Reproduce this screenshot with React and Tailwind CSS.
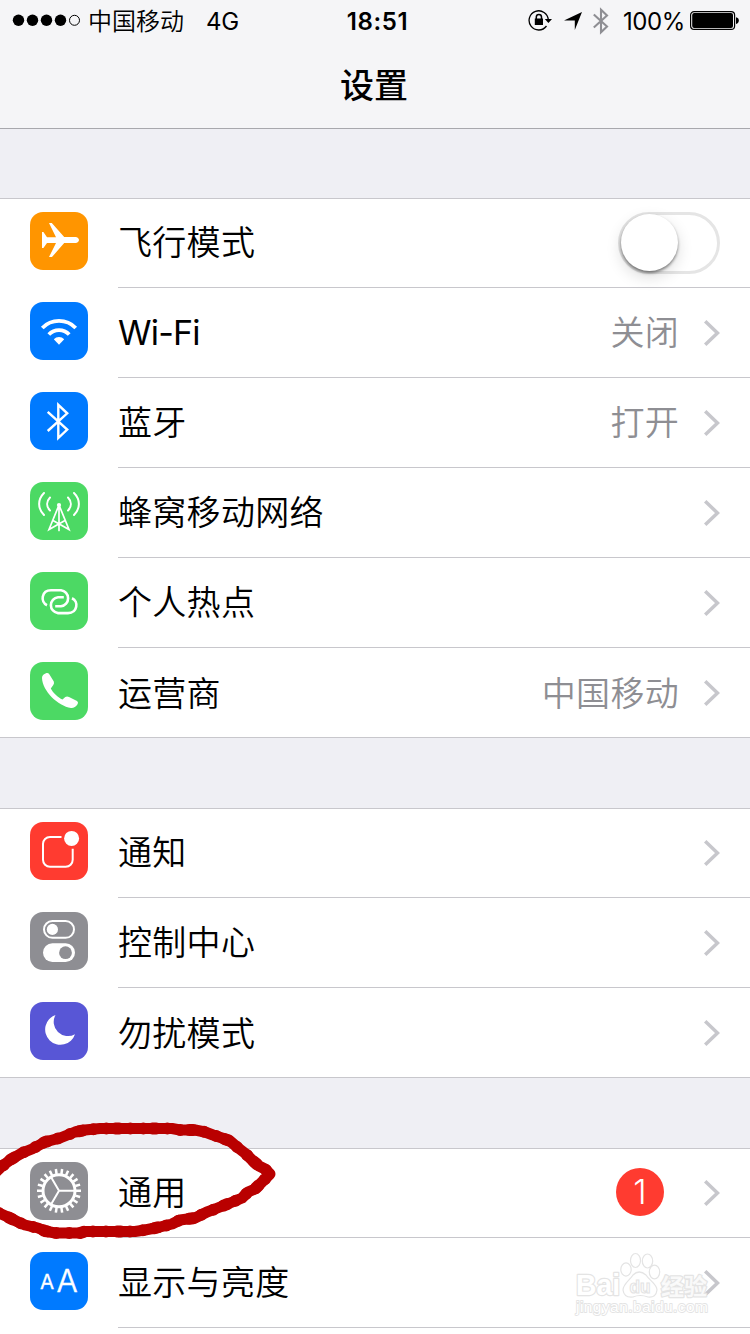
import React from "react";

const teeth = Array.from({ length: 22 }, (_, i) => (i * 360) / 22);

function Tile({ color, children }) {
  return (
    <svg viewBox="0 0 58 58" className={`size-[58px] shrink-0 rounded-[13px] ${color}`} fill="none" stroke="none">
      {children}
    </svg>
  );
}

const icons = {
  plane: (
    <Tile color="bg-[#ff9500]">
      <path
        fill="#fff"
        d="M12 20h1.400l3.600 5.300H26L19 11h2.800L34.200 25h11.300c2 0 3.500 1.500 3.500 3s-1.500 3-3.500 3H34.200L22 45h-3l7-14h-9l-3.600 5H12z"
      />
    </Tile>
  ),
  wifi: (
    <Tile color="bg-[#007aff]">
      <path stroke="#fff" strokeWidth="3.800" d="M12.300 26A23.300 23.300 0 0 1 45.700 26M18.800 32.500A14 14 0 0 1 39.200 32.500" />
      <path fill="#fff" d="M23.800 37.200a7.400 7.400 0 0 1 10.400 0L29 42.700z" />
    </Tile>
  ),
  bluetooth: (
    <Tile color="bg-[#007aff]">
      <path stroke="#fff" strokeWidth="2.400" d="M17.700 19.800L37.200 37.600L28.300 46V12.800L37.200 21.300L17.700 39" />
    </Tile>
  ),
  cellular: (
    <Tile color="bg-[#4cd964]">
      <g stroke="#fff" strokeWidth="2" strokeLinecap="round">
        <path d="M14 11C7.500 17.500 7.500 26.500 14 33M20 15.500C16.200 19.500 16.200 24.500 20 28.500M44 11C50.500 17.500 50.500 26.500 44 33M38 15.500C41.800 19.500 41.800 24.500 38 28.500" />
        <path strokeWidth="1.700" d="M29 23L19 47.500L35 38.500M29 23L39 47.500L23 38.500M29 23V48.500" />
      </g>
      <circle cx="29" cy="23" r="2.100" fill="#fff" />
    </Tile>
  ),
  hotspot: (
    <Tile color="bg-[#4cd964]">
      <g stroke="#fff" strokeWidth="2.600">
        <path d="M17 33.200C10 30 11.500 18.300 21 18.300H31A8 8 0 0 1 31 34.200H25.200" />
        <path transform="rotate(180 29.500 29.700)" d="M17 33.200C10 30 11.500 18.300 21 18.300H31A8 8 0 0 1 31 34.200H25.200" />
      </g>
    </Tile>
  ),
  phone: (
    <Tile color="bg-[#4cd964]">
      <path
        fill="#fff"
        d="M12 16Q11.800 12.600 16.500 11Q18.300 10.600 19.300 12.300L23.800 19.500Q24.500 21 23.300 23L20.800 26.500C22.800 30.500 28 35.500 32.500 37.600L35.300 35Q37 34 39 35L47 39Q48.600 40 47.700 42C46 45 43.500 46.200 41 46C28 44 12.500 29 12 16Z"
      />
    </Tile>
  ),
  notice: (
    <Tile color="bg-[#ff3b30]">
      <path stroke="#fff" strokeWidth="2" d="M31.500 15H20a7 7 0 0 0-7 7V37.800a7 7 0 0 0 7 7H35.700a7 7 0 0 0 7-7V26.700" />
      <circle cx="41.600" cy="16.400" r="7.500" fill="#fff" />
    </Tile>
  ),
  control: (
    <Tile color="bg-[#8e8e93]">
      <rect x="14" y="9" width="30" height="16.800" rx="8.400" stroke="#fff" strokeWidth="2" />
      <circle cx="22.400" cy="17.400" r="5.600" fill="#fff" />
      <rect x="13" y="31.300" width="32" height="18.700" rx="9.350" fill="#fff" />
      <circle cx="35.500" cy="40.700" r="6.400" fill="#8e8e93" />
    </Tile>
  ),
  moon: (
    <Tile color="bg-[#5856d6]">
      <path fill="#fff" d="M25.500 13A15.300 15.300 0 1 0 45 32.200A14.200 14.200 0 0 1 25.500 13Z" />
    </Tile>
  ),
  gear: (
    <Tile color="bg-[#8e8e93]">
      <g stroke="#fff">
        <circle cx="29" cy="28.800" r="16" strokeWidth="3" />
        {teeth.map((a) => (
          <path key={a} strokeWidth="2.500" d="M46 28.800H51" transform={`rotate(${a} 29 28.800)`} />
        ))}
        <path strokeWidth="2" d="M29 28.800H45M29 28.800L21 15M29 28.800L21 42.600" />
      </g>
    </Tile>
  ),
  display: (
    <Tile color="bg-[#007aff]">
      <g fill="#fff" stroke="#fff" fontFamily="Inter, sans-serif">
        <text x="10" y="37.300" fontSize="20.500" fontWeight="400" strokeWidth=".3" textLength="14">A</text>
        <text x="26.500" y="40.300" fontSize="31.500" fontWeight="300" strokeWidth=".5">A</text>
      </g>
    </Tile>
  ),
};

function Chevron() {
  return (
    <svg viewBox="0 0 18 28" className="ml-[24px] h-[28px] w-[18px] shrink-0" fill="none" stroke="#c7c7cc" strokeWidth="3.500">
      <path d="M3.200 2.200L15.500 14L3.200 25.800" />
    </svg>
  );
}

function Row({ icon, label, value, badge, toggle, latin, last }) {
  return (
    <div className="flex h-[90px] pl-[30px] first:-mt-px">
      <div className="pt-[14px]">{icons[icon]}</div>
      <div className={`ml-[30px] flex flex-1 items-center pr-[30px] text-[34px] ${last ? "" : "border-b border-[#c8c7cc]"}`}>
        <span className={`mr-auto whitespace-nowrap ${latin ? "font-[380] tracking-[-0.8px]" : "font-[350] tracking-[0.3px]"}`}>{label}</span>
        {value && <span className="-mr-px whitespace-nowrap font-[350] tracking-[0.3px] text-[#8e8e93]">{value}</span>}
        {badge && (
          <span className="mb-[2px] mr-[14px] flex size-[48px] items-center justify-center rounded-full bg-[#ff3b30] text-[34px] font-light leading-none text-white">
            {badge}
          </span>
        )}
        {toggle ? (
          <span className="mt-px flex h-[62px] w-[102px] rounded-full border-[3px] border-[#e5e5e5] bg-white">
            <span className="-mt-px size-[57px] rounded-full bg-white shadow-[0_6px_16px_rgba(0,0,0,0.14),0_2px_3px_rgba(0,0,0,0.45)]" />
          </span>
        ) : (
          <Chevron />
        )}
      </div>
    </div>
  );
}

function Section({ rows, open }) {
  return (
    <section className={`mt-[70px] shrink-0 border-t border-[#c8c7cc] bg-white ${open ? "" : "border-b"}`}>
      <div className={open ? "" : "-mb-px"}>
        {rows.map((row, i) => (
          <Row key={row.label} {...row} last={!open && i === rows.length - 1} />
        ))}
      </div>
    </section>
  );
}

function StatusBar() {
  return (
    <div className="grid h-[40px] grid-cols-[1fr_auto_1fr] items-center pl-[14px] pr-[11px] text-[24px] leading-none">
      <div className="-ml-[2px] flex items-center">
        <svg viewBox="0 0 70 14" className="h-[14px] w-[70px]">
          {[6.5, 20.5, 34.5, 48.5].map((x) => (
            <circle key={x} cx={x} cy="7.300" r="5.700" />
          ))}
          <circle cx="62.500" cy="7.300" r="5" fill="none" stroke="#000" />
        </svg>
        <span className="ml-[6px] mt-[3px] font-[350]">中国移动</span>
        <span className="ml-[22px] mt-[3px] font-[380] tracking-[-0.2px]">4G</span>
      </div>
      <span className="mt-[3px] pl-[2px] text-[24px] font-semibold tracking-[0.6px]">18:51</span>
      <div className="flex items-center justify-end">
        <svg viewBox="0 0 24 22" className="h-[22px] w-[24px]" fill="none" stroke="#000" strokeWidth="1.300">
          <path d="M18.500 17A9.600 9.600 0 1 1 20.300 11" />
          <path fill="#000" stroke="none" d="M16.800 10H24L20.400 14zM6.800 9.500H15V16H6.800z" />
          <path strokeWidth="1.500" d="M8.300 10V8a2.600 2.600 0 0 1 5.200 0v2" />
        </svg>
        <svg viewBox="0 0 18 18" className="ml-[12px] mt-px size-[18px]">
          <path d="M18 0L10.800 18V8.500H0z" />
        </svg>
        <svg viewBox="0 0 16 28" className="ml-[11px] mt-px h-[28px] w-[16px]" fill="none" stroke="#8e8e93" strokeWidth="2.100">
          <path d="M.8 7.500L14 19.500L8 25.200V2.800L14 8.500L.8 20.500" />
        </svg>
        <span className="ml-[14px] mt-[3px] font-[380] tracking-[-0.4px]">100%</span>
        <svg viewBox="0 0 49 20" className="ml-[5px] h-[20px] w-[49px]">
          <rect x=".6" y="1.600" width="44" height="17.800" rx="3.500" fill="none" stroke="#000" strokeWidth="1.200" />
          <rect x="2.200" y="3.100" width="40.800" height="14.800" rx="2" />
          <path d="M46 7.200q2.800.5 2.800 3.300T46 13.900z" />
        </svg>
      </div>
    </div>
  );
}

function Watermark() {
  return (
    <svg viewBox="0 0 140 66" className="absolute left-[572px] top-[1252px] h-[66px] w-[140px]" fill="#fff" stroke="#e4e4e4" strokeWidth="1.200">
      <g fontFamily="'Liberation Sans', 'Noto Sans CJK SC', sans-serif" fontWeight="700">
        <g strokeWidth="2.400" paintOrder="stroke" strokeLinejoin="round">
          <text x="4" y="43" fontSize="29" textLength="44" lengthAdjust="spacingAndGlyphs">Bai</text>
          <text x="89" y="43" fontSize="23" textLength="46" fillOpacity=".8">经验</text>
          <text x="4" y="60" fontSize="15.500" fontWeight="400" strokeWidth="1.800" textLength="132">jingyan.baidu.com</text>
        </g>
        <path d="M51 38C51 32 58 28 61 23Q67 17 74 23C77 28 85 32 85 38Q84 46 76 45Q68 42 61 45Q52 46 51 38Z" />
        <text x="57.500" y="41" fontSize="19" textLength="21" lengthAdjust="spacingAndGlyphs">du</text>
      </g>
      <ellipse cx="54" cy="17.500" rx="5.200" ry="6.600" />
      <ellipse cx="63.500" cy="8.500" rx="5" ry="7" />
      <ellipse cx="75.500" cy="9" rx="5.200" ry="7" />
      <ellipse cx="82.500" cy="20" rx="5.200" ry="6.800" />
    </svg>
  );
}

const stroke =
  "M-6 64L0 58L10 50L22 43L32 39L45 32L60 28L75 22L85 20L100 18.500H172L180 20H195L205 22L213 25L222 28L230 31L237 37L246 44L252 50L259 56L265 59L270 64L264 70L255 79L248 82L242 88L235 91L225 95L215 99L207 102L195 108L180 110L172 114L160 117L145 120L135 121.500H85L80 123H55L45 121L38 118L25 115L18 112L8 107L-6 101";

function Marker() {
  return (
    <svg viewBox="0 0 300 130" className="absolute left-0 top-[1110px] h-[130px] w-[300px]" fill="none" stroke="#b90000" strokeLinecap="round" strokeLinejoin="round">
      <path strokeWidth="11" d={stroke} />
      <path strokeWidth="12" strokeDasharray="0 13 0 9 4 11" d={stroke} />
    </svg>
  );
}

export default function App() {
  return (
    <main className="relative flex h-[1334px] w-[750px] flex-col overflow-hidden bg-[#efeff4] font-[Inter,'Noto_Sans_CJK_SC',sans-serif] text-black">
      <header className="h-[129px] shrink-0 border-b border-[#a8a8ad] bg-[#f5f5f7]">
        <StatusBar />
        <h1 className="mr-[2px] mt-[21px] text-center text-[34px] font-medium leading-[50px]">设置</h1>
      </header>
      <div className="-mt-px flex flex-col">
        <Section
          rows={[
            { icon: "plane", label: "飞行模式", toggle: true },
            { icon: "wifi", label: "Wi-Fi", value: "关闭", latin: true },
            { icon: "bluetooth", label: "蓝牙", value: "打开" },
            { icon: "cellular", label: "蜂窝移动网络" },
            { icon: "hotspot", label: "个人热点" },
            { icon: "phone", label: "运营商", value: "中国移动" },
          ]}
        />
        <Section
          rows={[
            { icon: "notice", label: "通知" },
            { icon: "control", label: "控制中心" },
            { icon: "moon", label: "勿扰模式" },
          ]}
        />
        <Section
          open
          rows={[
            { icon: "gear", label: "通用", badge: "1" },
            { icon: "display", label: "显示与亮度" },
          ]}
        />
        <div className="h-[20px] bg-white" />
      </div>
      <Watermark />
      <Marker />
    </main>
  );
}
